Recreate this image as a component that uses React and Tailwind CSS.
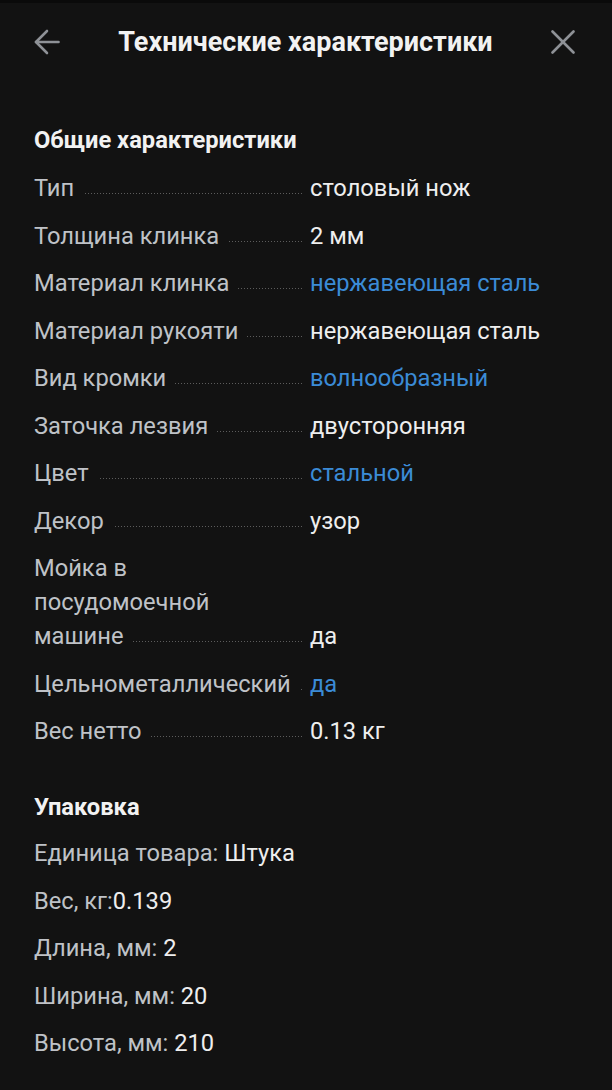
import React from "react";

const specs = [
  { label: "Тип", value: "столовый нож" },
  { label: "Толщина клинка", value: "2 мм" },
  { label: "Материал клинка", value: "нержавеющая сталь", link: true },
  { label: "Материал рукояти", value: "нержавеющая сталь" },
  { label: "Вид кромки", value: "волнообразный", link: true },
  { label: "Заточка лезвия", value: "двусторонняя" },
  { label: "Цвет", value: "стальной", link: true },
  { label: "Декор", value: "узор" },
  { label: "Мойка в посудомоечной машине", value: "да" },
  { label: "Цельнометаллический", value: "да", link: true },
  { label: "Вес нетто", value: "0.13 кг" },
];

const packing = [
  { label: "Единица товара: ", value: "Штука" },
  { label: "Вес, кг:", value: "0.139" },
  { label: "Длина, мм: ", value: "2" },
  { label: "Ширина, мм: ", value: "20" },
  { label: "Высота, мм: ", value: "210" },
];

function SpecRow({ label, value, link }) {
  return (
    <div className="flex items-end leading-[34px]">
      {/* label with dotted leader */}
      <div className="w-[268px] shrink-0 bg-[linear-gradient(to_right,#5c5c5c_1px,transparent_1px)] bg-[length:3px_1px] bg-repeat-x bg-[position:0_calc(100%-11px)]">
        <span className="bg-[#121212] pr-[9px] text-[#bfc2c7]">{label}</span>
      </div>
      <div className={"ml-2 " + (link ? "text-[#3b8bd6]" : "text-[#eeeeee]")}>
        {value}
      </div>
    </div>
  );
}

export default function App() {
  return (
    <div className="min-h-[1090px] bg-[#121212] font-['Roboto',sans-serif] text-[23.7px]">
      <div className="h-[3px] bg-[#0a0a0a]" />

      {/* Header */}
      <div className="h-[78px] flex items-center justify-between pl-[34px] pr-[37px]">
        <svg width="26" height="26" viewBox="0 0 26 26" fill="none" stroke="#8e9196" strokeWidth="2.6" strokeLinecap="round" strokeLinejoin="round">
          <path d="M24.5 13H2" />
          <path d="M13 2 2 13l11 11" />
        </svg>
        <div className="text-[27px] font-bold text-[#f2f2f2] leading-[36px]">Технические характеристики</div>
        <svg width="24" height="24" viewBox="0 0 24 24" fill="none" stroke="#8e9196" strokeWidth="2.6" strokeLinecap="round">
          <path d="M1.5 1.5 22.5 22.5" />
          <path d="M22.5 1.5 1.5 22.5" />
        </svg>
      </div>

      {/* Content */}
      <div className="px-[34px] pt-[45px] pb-8">
        <div className="text-[23.7px] font-bold leading-[28px] text-[#f2f2f2]">Общие характеристики</div>
        <div className="mt-[17px] flex flex-col gap-[13.5px]">
          {specs.map((s) => (
            <SpecRow key={s.label} {...s} />
          ))}
        </div>

        <div className="mt-[45px] text-[23.7px] font-bold leading-[28px] text-[#f2f2f2]">Упаковка</div>
        <div className="mt-[15px] flex flex-col gap-[13.5px]">
          {packing.map((p) => (
            <div key={p.label} className="leading-[34px]">
              <span className="text-[#bfc2c7]">{p.label}</span>
              <span className="text-[#eeeeee]">{p.value}</span>
            </div>
          ))}
        </div>
      </div>
    </div>
  );
}
